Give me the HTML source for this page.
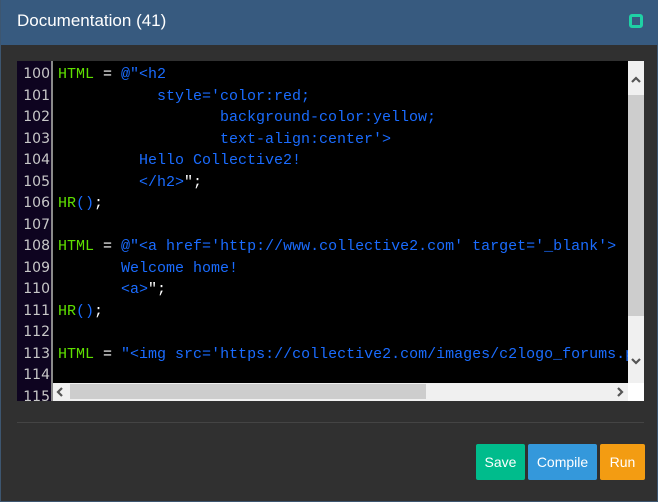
<!DOCTYPE html>
<html><head><style>
*{margin:0;padding:0;box-sizing:border-box}
body{width:658px;height:502px;background:#2a2a2a;position:relative;overflow:hidden;font-family:"Liberation Sans",sans-serif}
.modal{position:absolute;left:0;top:0;width:658px;height:502px;background:#303030;border:1px solid #3d5670;border-top:none}
.hdr{position:absolute;left:0;top:0;width:658px;height:45px;background:#375a7f}
.title{position:absolute;left:16px;top:11px;color:#fff;font-size:17px}
.icon{position:absolute;left:628px;top:14px;width:14px;height:14px;border:3px solid #1fd1a5;border-radius:3px}
.ed{position:absolute;left:16px;top:61px;width:627px;height:340px;background:#000;overflow:hidden}
.gut{position:absolute;left:0;top:0;width:36px;height:340px;background:#0e0420;border-right:2px solid #8a8a8a}
.ln{position:absolute;left:0;width:33px;text-align:right;color:#c8c8c8;font-size:14px;line-height:21.5px;font-family:"DejaVu Sans",sans-serif}
pre{position:absolute;left:41px;top:3px;font-family:"Liberation Mono",monospace;font-size:15px;line-height:21.5px;color:#1a6cff;white-space:pre}
.g{color:#5fe000}.w{color:#fff}
.vs{position:absolute;left:611px;top:0;width:16px;height:322px;background:#f0f0f0}
.vt{position:absolute;left:0;top:34px;width:16px;height:221px;background:#cdcdcd}
.hs{position:absolute;left:36px;top:322px;width:575px;height:18px;background:#f0f0f0}
.ht{position:absolute;left:17px;top:1px;width:356px;height:15px;background:#cdcdcd}
.corner{position:absolute;left:611px;top:322px;width:16px;height:18px;background:#fff}
svg{position:absolute}
.div{position:absolute;left:16px;top:422px;width:627px;height:1px;background:#444}
.btn{position:absolute;top:444px;height:36px;color:#fff;font-size:14px;text-align:center;line-height:36px;border-radius:2px}
</style></head><body>
<div class="modal">
<div class="hdr"><div class="title">Documentation (41)</div><div class="icon"></div></div>
<div class="ed">
<div class="gut">
<div class="ln" style="top:3px">100<br>101<br>102<br>103<br>104<br>105<br>106<br>107<br>108<br>109<br>110<br>111<br>112<br>113<br>114<br>115</div>
</div>
<pre><span class="g">HTML</span> <span class="w">=</span> @"&lt;h2
           style='color:red;
                  background-color:yellow;
                  text-align:center'&gt;
         Hello Collective2!
         &lt;/h2&gt;<span class="w">";</span>
<span class="g">HR</span>()<span class="w">;</span>

<span class="g">HTML</span> <span class="w">=</span> @"&lt;a href='http://www.collective2.com' target='_blank'&gt;
       Welcome home!
       &lt;a&gt;<span class="w">";</span>
<span class="g">HR</span>()<span class="w">;</span>

<span class="g">HTML</span> <span class="w">=</span> "&lt;img src='https://collective2.com/images/c2logo_forums.png'&gt;";
</pre>
<div class="vs"><div class="vt"></div>
<svg style="left:3px;top:15px" width="10" height="8" viewBox="0 0 10 8"><path d="M1 6L5 2L9 6" stroke="#555" stroke-width="2.2" fill="none"/></svg>
<svg style="left:3px;top:296px" width="10" height="8" viewBox="0 0 10 8"><path d="M1 2L5 6L9 2" stroke="#555" stroke-width="2.2" fill="none"/></svg>
</div>
<div class="hs"><div class="ht"></div>
<svg style="left:3px;top:4px" width="8" height="10" viewBox="0 0 8 10"><path d="M6 1L2 5L6 9" stroke="#555" stroke-width="2.2" fill="none"/></svg>
<svg style="left:563px;top:4px" width="8" height="10" viewBox="0 0 8 10"><path d="M2 1L6 5L2 9" stroke="#555" stroke-width="2.2" fill="none"/></svg>
</div>
<div class="corner"></div>
</div>
<div class="div"></div>
<div class="btn" style="left:475px;width:49px;background:#00bc8c">Save</div>
<div class="btn" style="left:527px;width:69px;background:#3498db">Compile</div>
<div class="btn" style="left:599px;width:45px;background:#f39c12">Run</div>
</div>
</body></html>
